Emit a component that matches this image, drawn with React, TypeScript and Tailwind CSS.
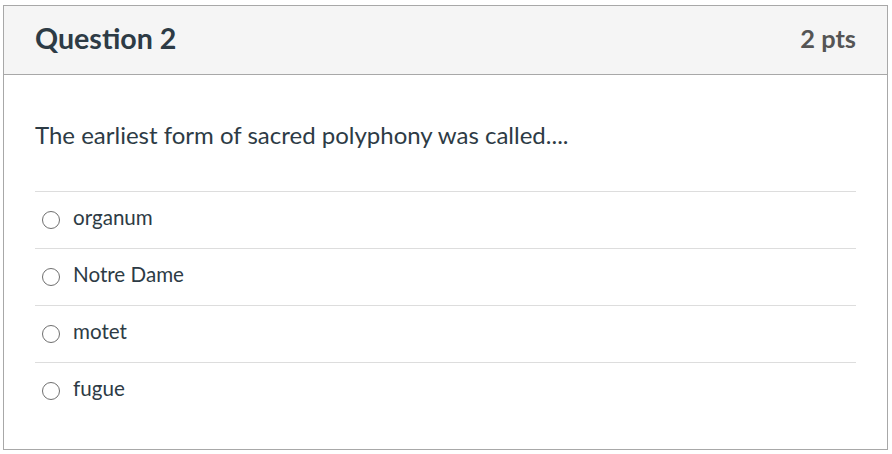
const answers = ['organum', 'Notre Dame', 'motet', 'fugue'];

export default function App() {
  return (
    <div className="min-h-screen bg-white pt-[5px] pl-[3px]" style={{ fontFamily: 'Lato, "Liberation Sans", sans-serif' }}>
      <div className="w-[885px] h-[445px] border border-[#a8a8a8] flex flex-col">
        {/* Header */}
        <div className="h-[69px] bg-[#f5f5f5] border-b border-[#a8a8a8] px-[31px] pb-[3px] flex items-center justify-between">
          <h2 className="text-[28.6px] font-bold text-[#2d3b45] leading-none">Question 2</h2>
          <div className="text-[25.4px] font-bold text-[#555555] leading-none">2 pts</div>
        </div>

        {/* Body */}
        <div className="px-[31px] pt-[45px]">
          <p className="text-[24px] leading-[30px] text-[#2d3b45]">
            The earliest form of sacred polyphony was called....
          </p>
          <div className="mt-[41px]">
            {answers.map((a) => (
              <label key={a} className="h-[57px] border-t border-[#dddddd] flex items-center gap-[13px] pl-[7px]">
                <span className="w-[18px] h-[18px] rounded-full border-[1.5px] border-[#6f6f6f] bg-white shrink-0" />
                <span className="text-[20.6px] leading-[26px] mb-[6px] text-[#2d3b45]">{a}</span>
              </label>
            ))}
          </div>
        </div>
      </div>
    </div>
  );
}
